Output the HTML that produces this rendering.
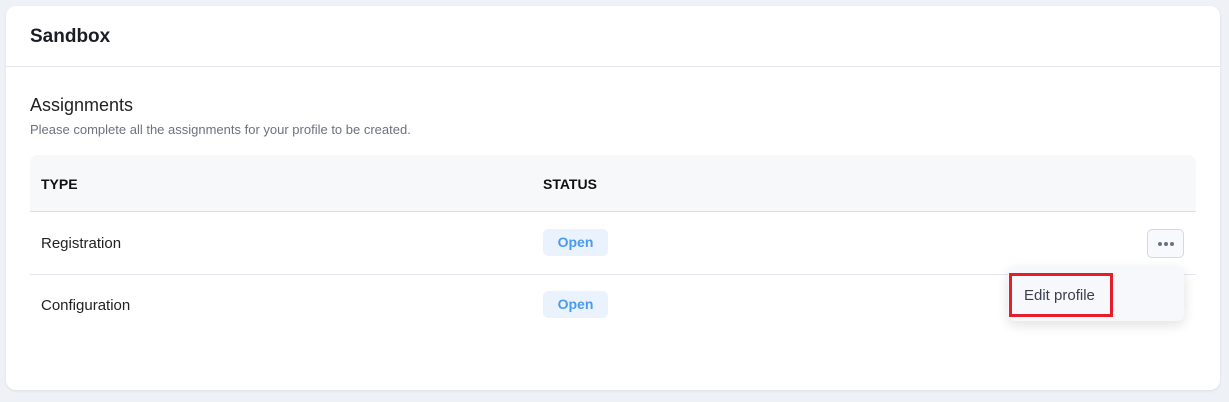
<!DOCTYPE html>
<html><head><style>
body{margin:0;width:1229px;height:402px;background:#eef2f6;font-family:"Liberation Sans",sans-serif;position:relative;overflow:hidden}
.card{position:absolute;left:6px;top:6px;width:1214px;height:384px;background:#fff;border-radius:10px;box-shadow:0 1px 3px rgba(0,0,0,.08)}
.hdr{position:absolute;left:0;top:0;right:0;height:60px;border-bottom:1px solid #e3e6ec}
.t{position:absolute;font-size:19px;color:#1a1d26;font-weight:bold}
.abs{position:absolute}
.th{position:absolute;left:24px;top:149px;width:1166px;height:56px;background:#f7f8fa;border-radius:8px 8px 0 0;border-bottom:1px solid #dcdfe5}
.bold{font-weight:bold;font-size:14px;color:#111}
.cell{font-size:15px;color:#222}
.badge{position:absolute;width:65px;height:27px;background:#eaf3fd;border-radius:5px;color:#4a9bef;font-weight:bold;font-size:14px;text-align:center;line-height:27px}
.dot{position:absolute;top:12px;width:4px;height:4px;border-radius:2px;background:#6b7280}
</style></head><body>
<div class="card">
<div class="hdr"></div>
<div class="t" style="left:24px;top:20px">Sandbox</div>
<div class="abs" style="left:24px;top:89px;font-size:18px;color:#222">Assignments</div>
<div class="abs" style="left:24px;top:116px;font-size:13px;color:#6b7280">Please complete all the assignments for your profile to be created.</div>
<div class="th"></div>
<div class="abs bold" style="left:35px;top:170px">TYPE</div>
<div class="abs bold" style="left:537px;top:170px">STATUS</div>
<div class="abs cell" style="left:35px;top:229px">Registration</div>
<div class="badge" style="left:537px;top:223px">Open</div>
<div class="abs" style="left:24px;top:268px;width:1166px;height:1px;background:#e3e6ec"></div>
<div class="abs cell" style="left:35px;top:291px">Configuration</div>
<div class="badge" style="left:537px;top:285px">Open</div>
<div class="abs" style="left:1141px;top:223px;width:35px;height:27px;border:1px solid #d4d8df;border-radius:5px;background:#f7f9fc">
<div class="dot" style="left:10px"></div><div class="dot" style="left:16px"></div><div class="dot" style="left:22px"></div></div>
<div class="abs" style="left:1002px;top:260px;width:176px;height:55px;background:#f6f8fb;border-radius:7px;box-shadow:0 4px 12px rgba(0,0,0,.12)"></div>
<div class="abs" style="left:1003px;top:267px;width:98px;height:38px;border:3px solid #e41e2a"></div>
<div class="abs" style="left:1018px;top:281px;font-size:15px;color:#3a3f4d">Edit profile</div>
</div>
</body></html>
